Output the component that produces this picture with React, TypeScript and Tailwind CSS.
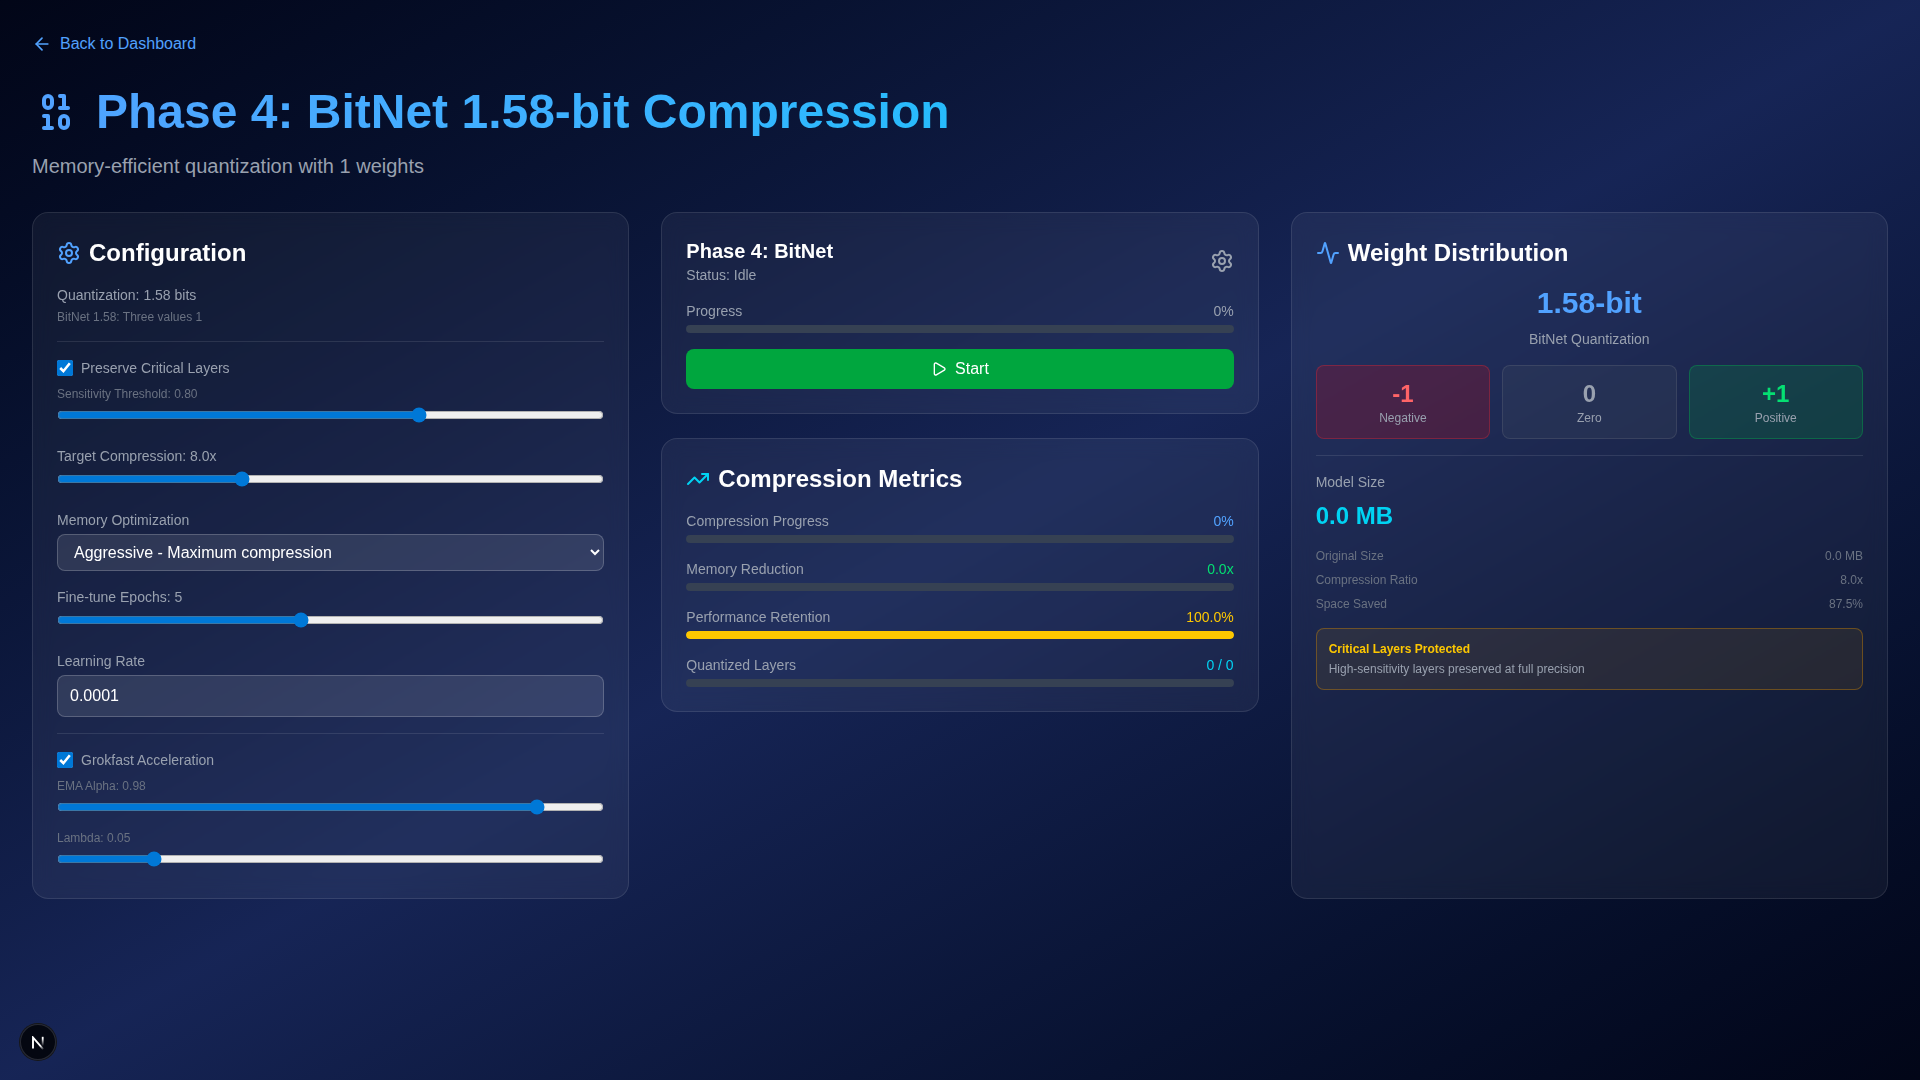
import type { ReactNode } from "react";
import { Activity, ArrowLeft, Binary, Play, Settings, TrendingUp } from "lucide-react";

function Card({ children }: { children: ReactNode }) {
  return (
    <section className="rounded-2xl border border-white/10 bg-white/5 p-6 backdrop-blur-[10px]">
      {children}
    </section>
  );
}

function CardTitle({ icon, children }: { icon: ReactNode; children: ReactNode }) {
  return (
    <h2 className="mb-4 flex items-center gap-2 text-2xl font-bold text-white">
      {icon}
      {children}
    </h2>
  );
}

type SliderProps = {
  label: string;
  min: number;
  max: number;
  step: number;
  value: number;
  small?: boolean;
};

function Slider({ label, min, max, step, value, small }: SliderProps) {
  return (
    <div>
      <label className={small ? "mb-1 block text-xs text-gray-500" : "mb-1 block text-sm text-gray-400"}>
        {label}
      </label>
      <input
        type="range"
        min={min}
        max={max}
        step={step}
        defaultValue={value}
        className="w-full accent-[#0078d7]"
      />
    </div>
  );
}

function Check({ label }: { label: string }) {
  return (
    <label className="mb-2 flex items-center gap-2 text-sm text-gray-400">
      <input type="checkbox" defaultChecked className="h-4 w-4 accent-[#0078d7]" />
      {label}
    </label>
  );
}

type MeterProps = { label: string; value: string; valueClass: string; percent: number };

function Meter({ label, value, valueClass, percent }: MeterProps) {
  return (
    <div>
      <div className="mb-1 flex justify-between text-sm">
        <span className="text-gray-400">{label}</span>
        <span className={valueClass}>{value}</span>
      </div>
      <div className="h-2 w-full overflow-hidden rounded-full bg-gray-700">
        <div className="h-2 rounded-full bg-yellow-400" style={{ width: `${percent}%` }} />
      </div>
    </div>
  );
}

const weights = [
  { value: "-1", label: "Negative", box: "border-red-500/30 bg-red-600/20", text: "text-red-400" },
  { value: "0", label: "Zero", box: "border-gray-500/30 bg-gray-600/20", text: "text-gray-400" },
  { value: "+1", label: "Positive", box: "border-green-500/30 bg-green-600/20", text: "text-green-400" },
];

const sizes = [
  ["Original Size", "0.0 MB"],
  ["Compression Ratio", "8.0x"],
  ["Space Saved", "87.5%"],
];

export default function App() {
  return (
    <div className="min-h-screen bg-linear-to-br from-slate-950 via-blue-950 to-slate-950 p-8 font-['Liberation_Sans',Arial,sans-serif] text-white">
      <header className="mb-8">
        <a href="#" className="flex w-fit items-center gap-2 text-blue-400">
          <ArrowLeft className="h-5 w-5" />
          Back to Dashboard
        </a>
        <h1 className="mt-8 mb-4 flex items-center gap-4 bg-linear-to-r from-blue-400 to-cyan-400 bg-clip-text text-5xl font-bold text-transparent">
          <Binary className="h-12 w-12 text-blue-400" />
          Phase 4: BitNet 1.58-bit Compression
        </h1>
        <p className="text-xl text-gray-400">Memory-efficient quantization with 1 weights</p>
      </header>

      <main className="grid grid-cols-3 gap-8">
        <Card>
          <CardTitle icon={<Settings className="h-6 w-6 text-blue-400" />}>Configuration</CardTitle>
          <div className="space-y-4">
            <div>
              <p className="text-sm text-gray-400">Quantization: 1.58 bits</p>
              <p className="mt-1 text-xs text-gray-500">BitNet 1.58: Three values 1</p>
            </div>
            <div className="border-t border-white/10 pt-4">
              <Check label="Preserve Critical Layers" />
              <Slider small label="Sensitivity Threshold: 0.80" min={0.5} max={0.95} step={0.05} value={0.8} />
            </div>
            <Slider label="Target Compression: 8.0x" min={4} max={16} step={0.5} value={8} />
            <div>
              <label className="mb-1 block text-sm text-gray-400">Memory Optimization</label>
              <select className="block w-full rounded-lg border border-white/20 bg-white/10 px-3 py-2 text-white">
                <option>Aggressive - Maximum compression</option>
              </select>
            </div>
            <Slider label="Fine-tune Epochs: 5" min={1} max={10} step={1} value={5} />
            <div>
              <label className="mb-1 block text-sm text-gray-400">Learning Rate</label>
              <input
                type="number"
                step={0.0001}
                defaultValue="0.0001"
                className="block w-full rounded-lg border border-white/20 bg-white/10 px-3 py-2 text-white"
              />
            </div>
            <div className="border-t border-white/10 pt-4">
              <Check label="Grokfast Acceleration" />
              <div className="space-y-2">
                <Slider small label="EMA Alpha: 0.98" min={0.9} max={0.99} step={0.01} value={0.98} />
                <Slider small label="Lambda: 0.05" min={0.01} max={0.25} step={0.01} value={0.05} />
              </div>
            </div>
          </div>
        </Card>

        <div className="space-y-6">
          <Card>
            <div className="mb-4 flex items-center justify-between">
              <div>
                <h3 className="text-xl font-bold text-white">Phase 4: BitNet</h3>
                <p className="text-sm text-gray-400">Status: Idle</p>
              </div>
              <Settings className="h-6 w-6 text-gray-400" />
            </div>
            <Meter label="Progress" value="0%" valueClass="text-gray-400" percent={0} />
            <button className="mt-4 flex w-full items-center justify-center gap-2 rounded-lg bg-green-600 py-2 text-white">
              <Play className="h-4 w-4" />
              Start
            </button>
          </Card>
          <Card>
            <CardTitle icon={<TrendingUp className="h-6 w-6 text-cyan-400" />}>Compression Metrics</CardTitle>
            <div className="space-y-4">
              <Meter label="Compression Progress" value="0%" valueClass="text-blue-400" percent={0} />
              <Meter label="Memory Reduction" value="0.0x" valueClass="text-green-400" percent={0} />
              <Meter label="Performance Retention" value="100.0%" valueClass="text-yellow-400" percent={100} />
              <Meter label="Quantized Layers" value="0 / 0" valueClass="text-cyan-400" percent={0} />
            </div>
          </Card>
        </div>

        <Card>
          <CardTitle icon={<Activity className="h-6 w-6 text-blue-400" />}>Weight Distribution</CardTitle>
          <div className="space-y-4">
            <div className="text-center">
              <div className="mb-2 text-3xl font-bold text-blue-400">1.58-bit</div>
              <div className="text-sm text-gray-400">BitNet Quantization</div>
            </div>
            <div className="grid grid-cols-3 gap-3">
              {weights.map((w) => (
                <div key={w.label} className={`rounded-lg border p-3 text-center ${w.box}`}>
                  <div className={`text-2xl font-bold ${w.text}`}>{w.value}</div>
                  <div className="text-xs text-gray-400">{w.label}</div>
                </div>
              ))}
            </div>
            <div className="border-t border-white/10 pt-4">
              <div className="mb-2 text-sm text-gray-400">Model Size</div>
              <div className="text-2xl font-bold text-cyan-400">0.0 MB</div>
            </div>
            <div className="space-y-2 text-xs text-gray-500">
              {sizes.map(([label, value]) => (
                <div key={label} className="flex justify-between">
                  <span>{label}</span>
                  <span>{value}</span>
                </div>
              ))}
            </div>
            <div className="rounded-lg border border-yellow-600/40 bg-yellow-600/10 p-3 text-xs">
              <div className="mb-1 font-semibold text-yellow-400">Critical Layers Protected</div>
              <div className="text-gray-400">High-sensitivity layers preserved at full precision</div>
            </div>
          </div>
        </Card>
      </main>

      <div className="fixed bottom-5 left-5 flex h-9 w-9 items-center justify-center rounded-full bg-black/80 shadow-[0_0_0_1px_#171717,inset_0_0_0_1px_rgba(255,255,255,0.14)]">
        <svg className="mt-0.5" width="12" height="14" viewBox="0 0 12 14" fill="none">
          <defs>
            <linearGradient id="stem" x1="0" y1="0" x2="0" y2="1">
              <stop offset="0.2" stopColor="#fff" />
              <stop offset="1" stopColor="#fff" stopOpacity="0" />
            </linearGradient>
            <linearGradient id="slash" x1="0" y1="0" x2="1" y2="1">
              <stop offset="0.7" stopColor="#fff" />
              <stop offset="1" stopColor="#fff" stopOpacity="0.15" />
            </linearGradient>
          </defs>
          <path d="M1 12.5V1.5L11.2 13.2" stroke="url(#slash)" strokeWidth="1.9" />
          <rect x="9.8" y="0.8" width="1.8" height="9.2" fill="url(#stem)" />
        </svg>
      </div>
    </div>
  );
}
